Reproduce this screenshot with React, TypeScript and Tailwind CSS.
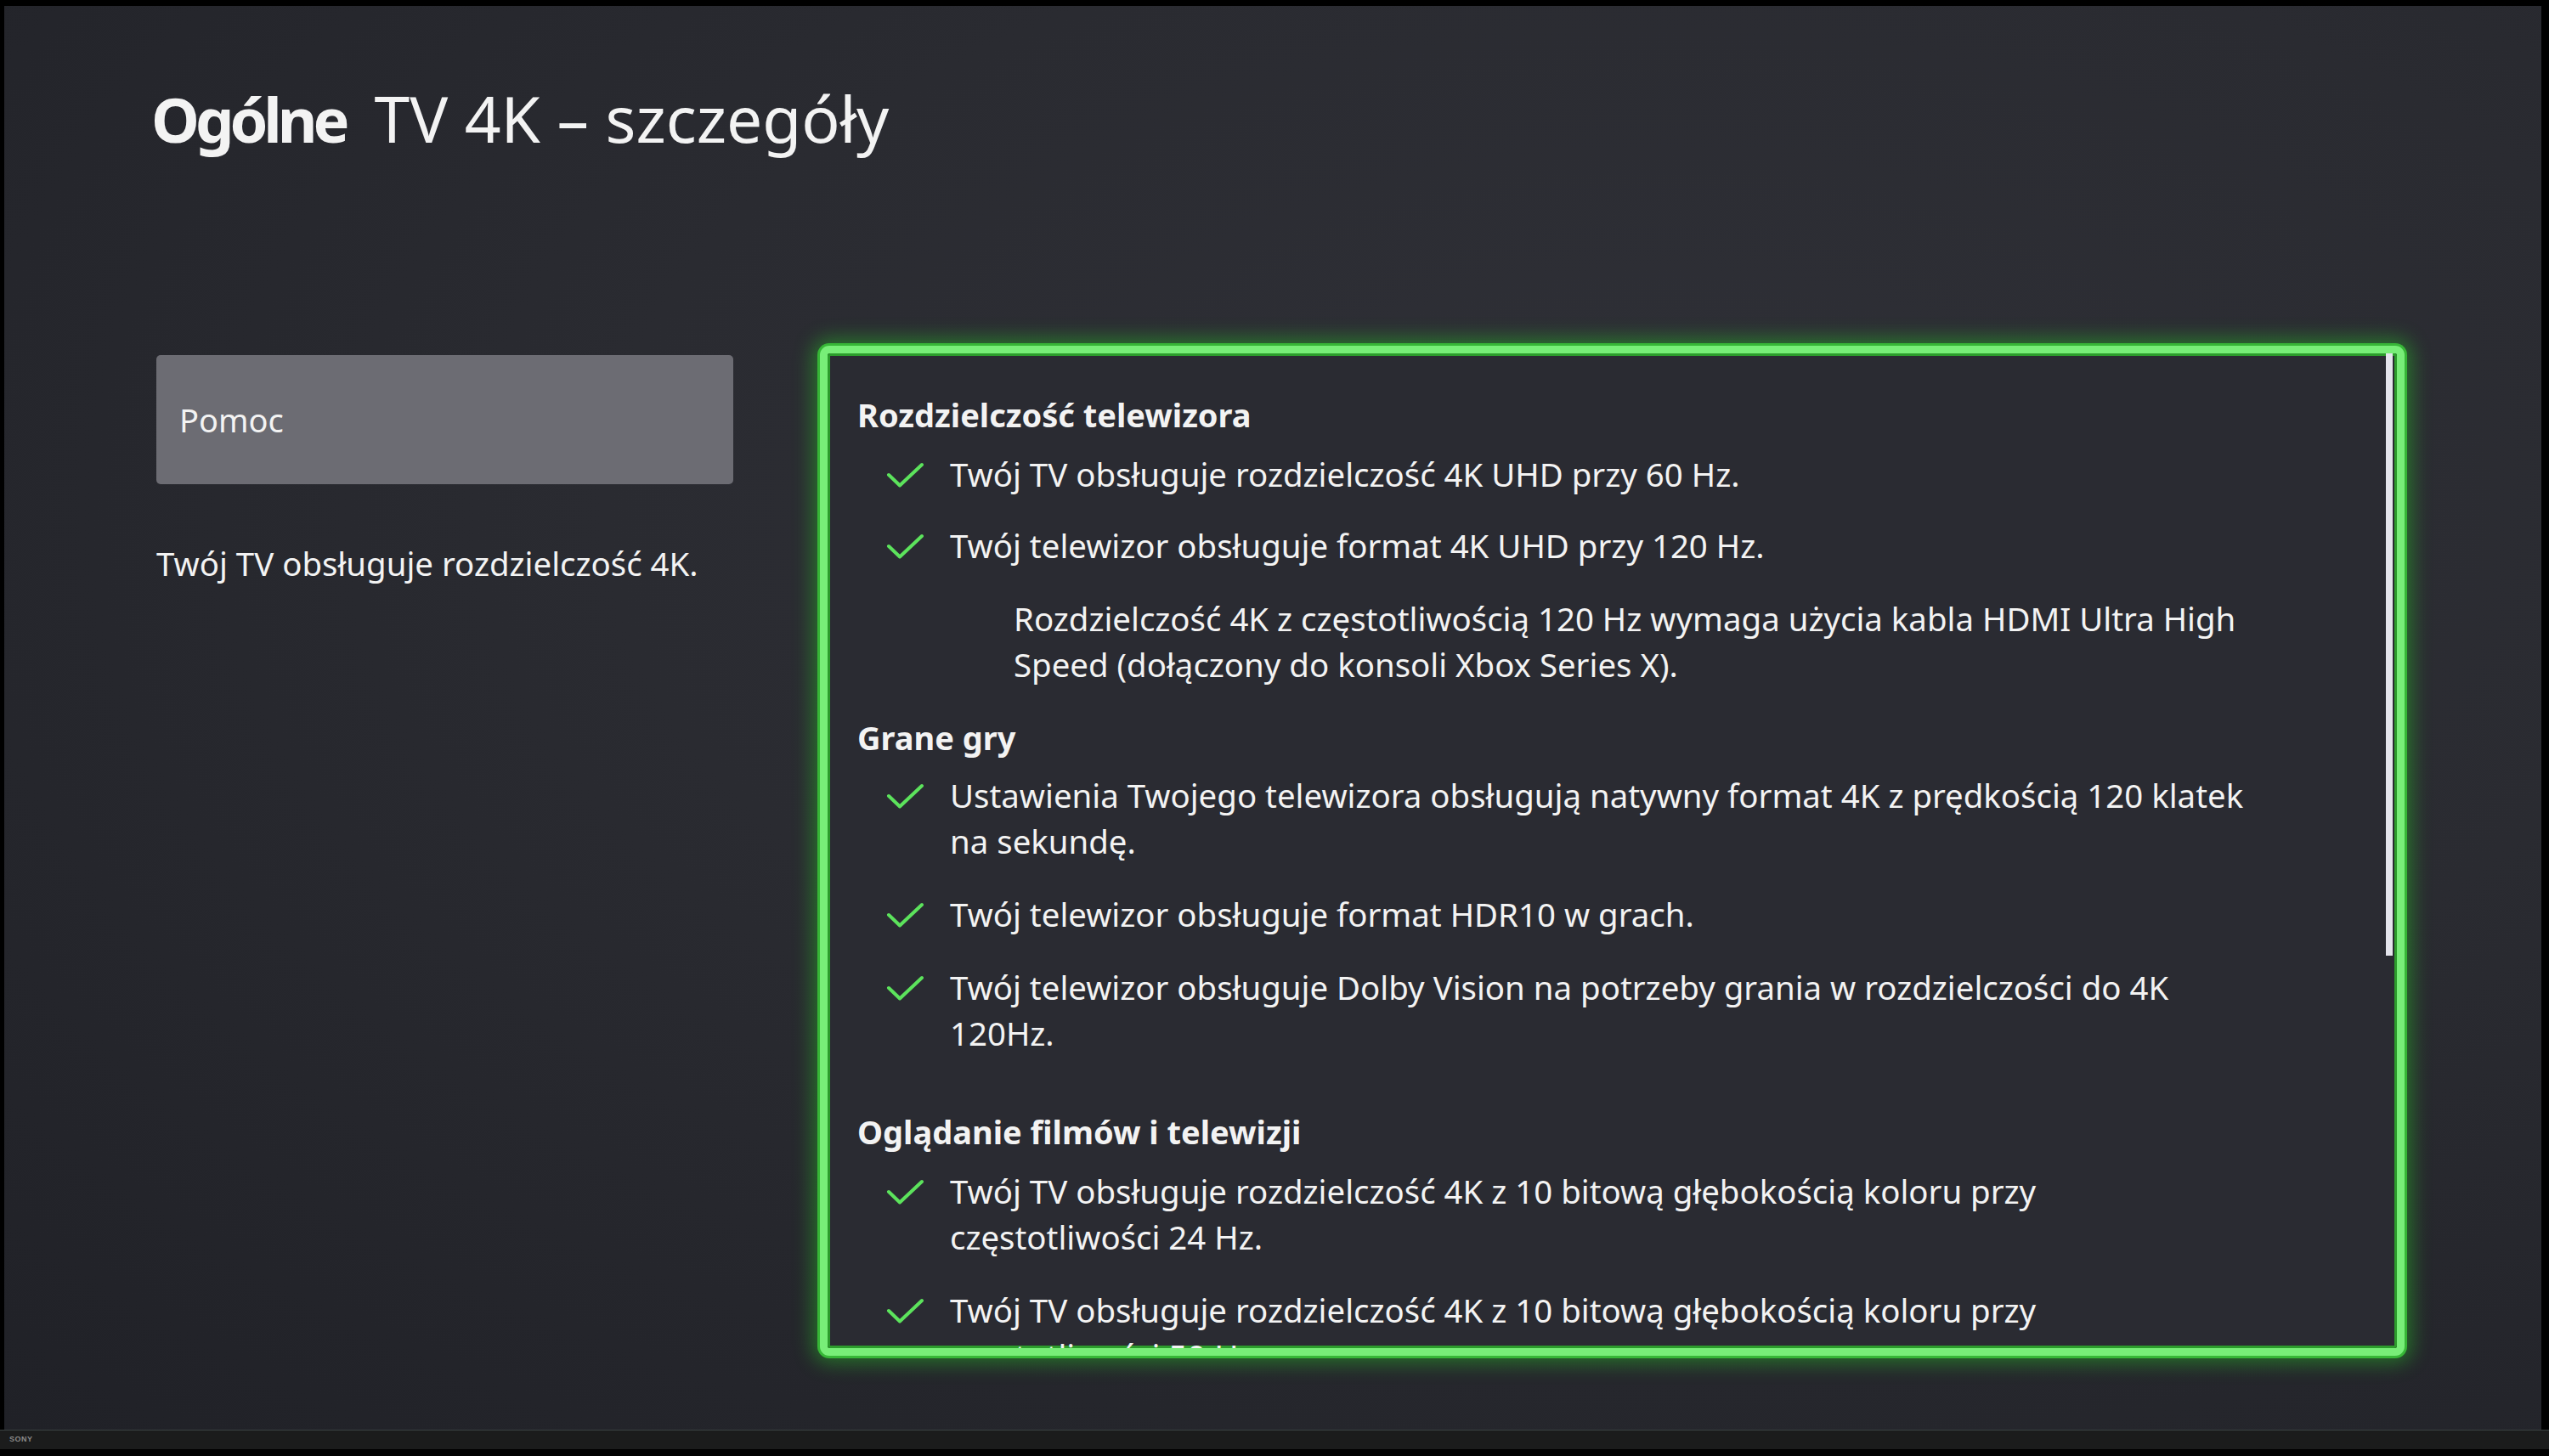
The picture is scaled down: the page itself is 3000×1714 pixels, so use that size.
import type { ReactNode } from "react";

const font = { fontFamily: '"Noto Sans", "Open Sans", sans-serif' };

function Check() {
  return (
    <svg width="45" height="30" viewBox="0 0 45 30" className="shrink-0 mt-[13px]">
      <path
        d="M3 15 L16 27.5 L42 3"
        fill="none"
        stroke="#5ce35c"
        strokeWidth="4"
        strokeLinecap="round"
        strokeLinejoin="round"
      />
    </svg>
  );
}

function Item({ children }: { children: ReactNode }) {
  return (
    <div className="flex items-start pl-[34px]">
      <Check />
      <p className="ml-[30px] whitespace-nowrap">{children}</p>
    </div>
  );
}

function Heading({ children }: { children: ReactNode }) {
  return <h3 className="font-bold text-[38px] leading-[54px] whitespace-nowrap">{children}</h3>;
}

export default function App() {
  return (
    <div className="w-[3000px] h-[1714px] bg-black flex flex-col overflow-hidden" style={font}>
      {/* screen */}
      <div className="flex-1 flex pt-[7px] pl-[5px] pr-[9px]">
        <div className="flex-1 bg-[radial-gradient(ellipse_at_65%_35%,#2f3037_0%,#2a2b31_45%,#202127_100%)] text-[#f3f3f3] pl-[173px] pt-[82px]">
          <h1 className="text-[75px] leading-[100px] whitespace-nowrap">
            <span className="font-bold text-[72px] tracking-[-0.07em]">Ogólne</span>
            <span className="ml-[34px]">TV 4K – szczegóły</span>
          </h1>

          <div className="flex mt-[214px] ml-[6px]">
            {/* left column */}
            <div className="w-[679px] shrink-0 pt-[14px]">
              <div className="h-[152px] rounded-[5px] bg-[#6c6c73] flex items-center pl-[27px] text-[38px]">
                Pomoc
              </div>
              <p className="mt-[66px] text-[38.4px] leading-[54px] whitespace-nowrap">
                Twój TV obsługuje rozdzielczość 4K.
              </p>
            </div>

            {/* details panel */}
            <div className="ml-[99px] w-[1871px] h-[1195px] rounded-[14px] p-[3px] bg-[#37b637] shadow-[0_0_22px_6px_rgba(40,200,40,0.45)]">
              <div className="h-full rounded-[11px] border-[9px] border-[#78ee78]">
                <div className="relative h-full rounded-[3px] bg-[#2a2b32] shadow-[inset_0_0_0_3px_#2c9c2c] overflow-hidden pt-[45px] pl-[35px] text-[38.4px] leading-[54px]">
                  <div className="absolute right-[5px] top-0 w-[8px] h-[709px] bg-[#e4e4ec]" />

                  <Heading>Rozdzielczość telewizora</Heading>
                  <div className="mt-[16px] space-y-[30px]">
                    <Item>Twój TV obsługuje rozdzielczość 4K UHD przy 60 Hz.</Item>
                    <Item>Twój telewizor obsługuje format 4K UHD przy 120 Hz.</Item>
                  </div>
                  <p className="mt-[32px] pl-[184px] whitespace-nowrap">
                    Rozdzielczość 4K z częstotliwością 120 Hz wymaga użycia kabla HDMI Ultra High
                    <br />
                    Speed (dołączony do konsoli Xbox Series X).
                  </p>

                  <div className="mt-[32px]">
                    <Heading>Grane gry</Heading>
                  </div>
                  <div className="mt-[14px] space-y-[32px]">
                    <Item>
                      Ustawienia Twojego telewizora obsługują natywny format 4K z prędkością 120 klatek
                      <br />
                      na sekundę.
                    </Item>
                    <Item>Twój telewizor obsługuje format HDR10 w grach.</Item>
                    <Item>
                      Twój telewizor obsługuje Dolby Vision na potrzeby grania w rozdzielczości do 4K
                      <br />
                      120Hz.
                    </Item>
                  </div>

                  <div className="mt-[62px]">
                    <Heading>Oglądanie filmów i telewizji</Heading>
                  </div>
                  <div className="mt-[16px] space-y-[32px]">
                    <Item>
                      Twój TV obsługuje rozdzielczość 4K z 10 bitową głębokością koloru przy
                      <br />
                      częstotliwości 24 Hz.
                    </Item>
                    <Item>
                      Twój TV obsługuje rozdzielczość 4K z 10 bitową głębokością koloru przy
                      <br />
                      częstotliwości 50 Hz.
                    </Item>
                  </div>
                </div>
              </div>
            </div>
          </div>
        </div>
      </div>

      {/* tv bezel */}
      <div className="h-[31px] shrink-0 bg-black">
        <div className="h-[23px] bg-[#1b1c1c] border-t border-[#3a4242] flex items-center pl-[11px]">
          <span className="text-[9px] font-bold tracking-[0.5px] text-[#8a8a8a]" style={{ fontFamily: '"Liberation Sans", sans-serif' }}>
            SONY
          </span>
        </div>
      </div>
    </div>
  );
}
